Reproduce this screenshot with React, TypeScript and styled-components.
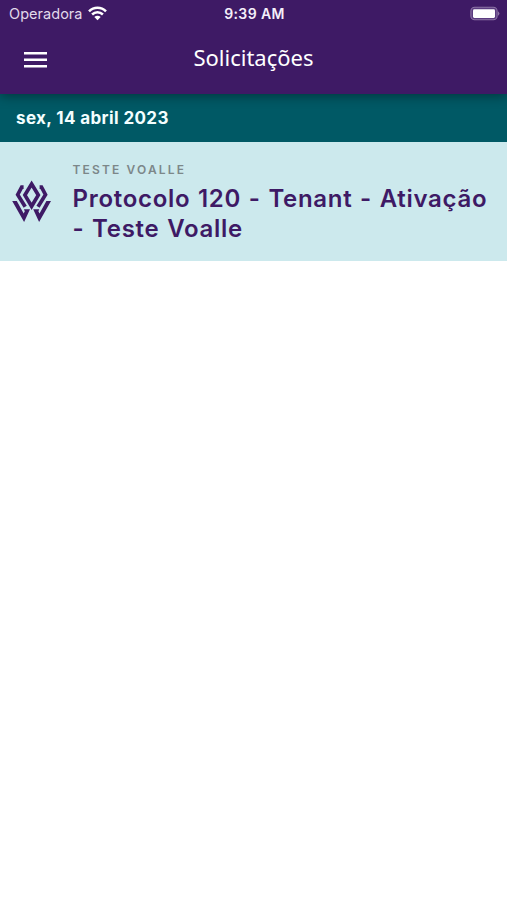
import React from "react";
import styled, { createGlobalStyle } from "styled-components";

const GlobalStyle = createGlobalStyle`
  * { box-sizing: border-box; }
  body { margin: 0; background: #fff; font-family: Inter, "Liberation Sans", sans-serif; }
`;

const Screen = styled.main`
  min-height: 900px;
  background: #fff;
`;

const Header = styled.header`
  position: relative;
  height: 94px;
  background: #3e1a65;
  color: #fff;
  box-shadow: 0 2px 11px rgba(0, 0, 0, 0.4);
`;

const StatusBar = styled.div`
  display: grid;
  grid-template-columns: 1fr auto 1fr;
  align-items: center;
  height: 27px;
  padding: 0 7px 0 9px;
`;

const Carrier = styled.div`
  display: flex;
  align-items: center;
  gap: 5px;
  color: #e2d9eb;
  font-size: 14.5px;
  line-height: 27px;
  letter-spacing: 0.04px;
`;

const Clock = styled.time`
  color: #f4effa;
  font-size: 14px;
  font-weight: 600;
  line-height: 27px;
  letter-spacing: 0.4px;
`;

const BatterySlot = styled.div`
  display: flex;
  justify-content: flex-end;
`;

const Toolbar = styled.div`
  display: grid;
  grid-template-columns: 70px 1fr 70px;
  align-items: center;
  height: 64px;
`;

const MenuButton = styled.button`
  display: flex;
  justify-content: center;
  padding: 1px 0 0;
  border: 0;
  background: none;
  color: #fff;
`;

const Title = styled.h1`
  margin: 0 0 4px;
  text-align: center;
  font: 400 22px/30px "Noto Sans", sans-serif;
`;

const DateHeading = styled.h2`
  display: flex;
  align-items: center;
  height: 48px;
  margin: 0;
  padding: 0 16px;
  background: #005965;
  color: #f3ffff;
  font-size: 17px;
  font-weight: 700;
  letter-spacing: 0.38px;
`;

const RequestRow = styled.article`
  display: flex;
  height: 119px;
  padding: 19px 16px 0 12px;
  background: #cce9ed;
`;

const LogoSlot = styled.div`
  flex: 0 0 60.5px;
  padding-top: 19px;
`;

const Client = styled.div`
  color: #7c8789;
  font-size: 12px;
  font-weight: 600;
  line-height: 17px;
  letter-spacing: 2.15px;
`;

const Subject = styled.div`
  margin-top: 6px;
  color: #3e1a65;
  font-size: 24px;
  font-weight: 620;
  line-height: 29.5px;
  letter-spacing: 0.7px;
  word-spacing: 1px;
  white-space: nowrap;
`;

const WifiIcon = () => (
  <svg width="19" height="15" viewBox="0 0 19 15" fill="none" stroke="#fff" strokeWidth="2.5">
    <path d="M1 5.3C5.8 0.4 13.2 0.4 18 5.3" />
    <path d="M4.1 8.5C7.2 5.4 11.8 5.4 14.9 8.5" />
    <path d="M9.5 14.2L6.3 11.1C8.1 9.3 10.9 9.3 12.7 11.1Z" fill="#fff" stroke="none" />
  </svg>
);

const BatteryIcon = () => (
  <svg width="30" height="15" viewBox="0 0 30 15">
    <rect x="0.9" y="1.2" width="26.2" height="12.6" rx="3.8" fill="#5b3b80" stroke="#8e75a6" strokeWidth="1.1" />
    <rect x="3" y="3.2" width="22" height="8.7" rx="1.3" fill="#fff" />
    <path d="M28 5.2Q30.8 7.5 28 9.8Z" fill="#8e75a6" />
  </svg>
);

const MenuIcon = () => (
  <svg width="23" height="16" viewBox="0 0 23 16" fill="#fff">
    <path d="M0 0H23V2.6H0ZM0 6.5H23V9.1H0ZM0 12.9H23V15.5H0Z" />
  </svg>
);

const BrandLogo = () => (
  <svg width="40" height="44" viewBox="0 0 40 44" fill="none" stroke="#3e1a65" strokeWidth="3.7">
    <path d="M19.6 4L26.3 15.1L19.6 26.3L12.9 15.1Z" />
    <path d="M11.6 7.2H9.7L5.7 14.6L13.2 26.8" />
    <path d="M27.6 7.2H29.5L33.5 14.6L26 26.8" />
    <path d="M0.2 21.1H4.8L11.7 33.4L12.8 31.2L11.9 29.2H18L12.1 42.1Z" fill="#3e1a65" stroke="none" />
    <path d="M39 21.1H34.4L27.5 33.4L26.4 31.2L27.3 29.2H21.2L27.1 42.1Z" fill="#3e1a65" stroke="none" />
  </svg>
);

export default function App() {
  return (
    <Screen>
      <GlobalStyle />
      <Header>
        <StatusBar>
          <Carrier>Operadora <WifiIcon /></Carrier>
          <Clock>9:39 AM</Clock>
          <BatterySlot><BatteryIcon /></BatterySlot>
        </StatusBar>
        <Toolbar>
          <MenuButton aria-label="Menu"><MenuIcon /></MenuButton>
          <Title>Solicitações</Title>
        </Toolbar>
      </Header>
      <DateHeading>sex, 14 abril 2023</DateHeading>
      <RequestRow>
        <LogoSlot><BrandLogo /></LogoSlot>
        <div>
          <Client>TESTE VOALLE</Client>
          <Subject>Protocolo 120 - Tenant - Ativação<br />- Teste Voalle</Subject>
        </div>
      </RequestRow>
    </Screen>
  );
}
